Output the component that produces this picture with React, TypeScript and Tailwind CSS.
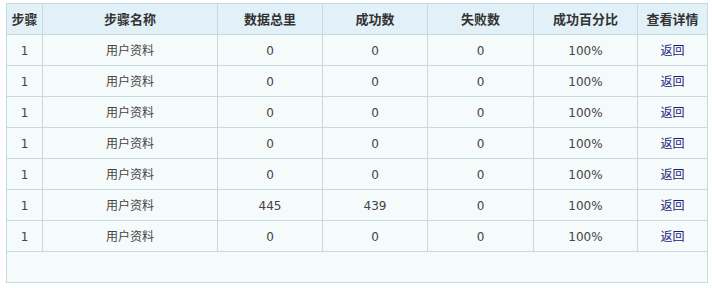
import React from "react";

const rows = [
  { step: 1, name: "用户资料", total: 0, ok: 0, fail: 0, pct: "100%" },
  { step: 1, name: "用户资料", total: 0, ok: 0, fail: 0, pct: "100%" },
  { step: 1, name: "用户资料", total: 0, ok: 0, fail: 0, pct: "100%" },
  { step: 1, name: "用户资料", total: 0, ok: 0, fail: 0, pct: "100%" },
  { step: 1, name: "用户资料", total: 0, ok: 0, fail: 0, pct: "100%" },
  { step: 1, name: "用户资料", total: 445, ok: 439, fail: 0, pct: "100%" },
  { step: 1, name: "用户资料", total: 0, ok: 0, fail: 0, pct: "100%" },
];

const heads = ["步骤", "步骤名称", "数据总里", "成功数", "失败数", "成功百分比", "查看详情"];
const widths = ["w-[36px]", "w-[175px]", "w-[105px]", "w-[105px]", "w-[106px]", "w-[104px]", "w-[70px]"];

export default function App() {
  return (
    <div className="w-[712px] h-[288px] bg-white pt-[3px] pl-[6px] font-['DejaVu_Sans','Noto_Sans_CJK_SC',sans-serif] text-[12px]">
      <table className="w-[702px] border-collapse table-fixed bg-[#f5fafb]">
        <colgroup>
          {widths.map((w, i) => (
            <col key={i} className={w} />
          ))}
        </colgroup>
        <thead>
          <tr className="h-[31px] bg-[#e2f1f8]">
            {heads.map((h) => (
              <th key={h} className="border border-[#c4dadd] text-center font-bold text-[13px] text-[#333] p-0 font-['Noto_Sans_CJK_SC',sans-serif]">
                {h}
              </th>
            ))}
          </tr>
        </thead>
        <tbody>
          {rows.map((r, i) => (
            <tr key={i} className="h-[31px] text-[#444]">
              <td className="border border-[#c4dadd] text-center p-0 pt-[2px]">{r.step}</td>
              <td className="border border-[#c4dadd] text-center p-0 pt-[2px]">{r.name}</td>
              <td className="border border-[#c4dadd] text-center p-0 pt-[2px]">{r.total}</td>
              <td className="border border-[#c4dadd] text-center p-0 pt-[2px]">{r.ok}</td>
              <td className="border border-[#c4dadd] text-center p-0 pt-[2px]">{r.fail}</td>
              <td className="border border-[#c4dadd] text-center p-0 pt-[2px]">{r.pct}</td>
              <td className="border border-[#c4dadd] text-center p-0 pt-[2px]">
                <a href="#" className="text-[#1c1c7a]">返回</a>
              </td>
            </tr>
          ))}
          <tr className="h-[31px]">
            <td colSpan={7} className="border border-[#c4dadd] p-0"></td>
          </tr>
        </tbody>
      </table>
    </div>
  );
}
